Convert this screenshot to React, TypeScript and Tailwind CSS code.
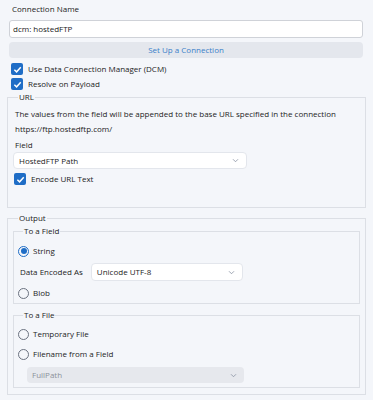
import { ReactNode } from 'react';

const font = { fontFamily: '"Open Sans", "Noto Sans", sans-serif' };

function Check({ label }: { label: string }) {
  return (
    <label className="flex items-center h-[14px] gap-[5px]">
      <span className="w-[12px] h-[12px] rounded-[2px] bg-[#1f6dc6] flex items-center justify-center">
        <svg width="9" height="9" viewBox="0 0 10 10">
          <path d="M1.5 5.2 L4 7.6 L8.6 2.4" fill="none" stroke="white" strokeWidth="1.6" />
        </svg>
      </span>
      <span className="text-[8px] text-[#1c1c1c]">{label}</span>
    </label>
  );
}

function Radio({ label, checked }: { label: string; checked?: boolean }) {
  return (
    <label className="flex items-center h-[12px] gap-[4px]">
      {checked ? (
        <span className="w-[11px] h-[11px] rounded-full border border-[#1f6dc6] flex items-center justify-center">
          <span className="w-[6px] h-[6px] rounded-full bg-[#1f6dc6]" />
        </span>
      ) : (
        <span className="w-[11px] h-[11px] rounded-full border border-[#6b7280]" />
      )}
      <span className="text-[8px] text-[#1c1c1c]">{label}</span>
    </label>
  );
}

function Chevron() {
  return (
    <svg width="7" height="5" viewBox="0 0 8 6" className="shrink-0">
      <path d="M1 1.5 L4 4.5 L7 1.5" fill="none" stroke="#8a93a3" strokeWidth="1" />
    </svg>
  );
}

function Select({ value, disabled, className }: { value: string; disabled?: boolean; className: string }) {
  return (
    <div
      className={`flex items-center justify-between rounded-[4px] pl-[5px] pr-[7px] text-[8px] ${
        disabled ? 'bg-[#e6e8ed] text-[#8c919a]' : 'bg-white border border-[#e3e6ec] text-[#1c1c1c]'
      } ${className}`}
    >
      <span>{value}</span>
      <Chevron />
    </div>
  );
}

function Group({ title, className, children }: { title: string; className: string; children: ReactNode }) {
  return (
    <fieldset className={`border border-[#dcdfe5] ${className}`}>
      <legend className="ml-[5px] px-[1px] text-[8px] leading-[12px] text-[#1c1c1c]">{title}</legend>
      {children}
    </fieldset>
  );
}

export default function App() {
  return (
    <div className="w-[373px] h-[400px] bg-[#f4f6fa] px-[7px] pt-[3px] overflow-hidden" style={font}>
      <div className="ml-[2px] mr-[3px]">
        <div className="h-[12px] leading-[12px] text-[8px] text-[#1c1c1c] pl-[3px]">Connection Name</div>
        <div className="mt-[5px] h-[18px] bg-white border border-[#cfd2d8] rounded-[3px] flex items-center px-[3px] text-[8px] text-[#1a1a1a]">
          dcm: hostedFTP
        </div>
        <button className="mt-[4px] w-full h-[16px] bg-[#e4e7ed] rounded-[4px] text-[8px] text-[#3a80c9] flex items-center justify-center">
          Set Up a Connection
        </button>
        <div className="mt-[4px] pl-[2px] flex flex-col gap-[1px]">
          <Check label="Use Data Connection Manager (DCM)" />
          <Check label="Resolve on Payload" />
        </div>
      </div>

      <Group title="URL" className="px-[5px] pb-[21px]">
        <div className="pl-[2px] mt-[5px] h-[12px] leading-[12px] text-[8px] text-[#1c1c1c] whitespace-nowrap">
          The values from the field will be appended to the base URL specified in the connection
        </div>
        <div className="pl-[2px] mt-[3px] h-[12px] leading-[12px] text-[8px] text-[#1c1c1c]">https://ftp.hostedftp.com/</div>
        <div className="pl-[2px] mt-[4px] h-[12px] leading-[12px] text-[8px] text-[#1c1c1c]">Field</div>
        <Select value="HostedFTP Path" className="mt-[1px] w-[234px] h-[17px]" />
        <div className="mt-[3px] pl-[1px]">
          <Check label="Encode URL Text" />
        </div>
      </Group>

      <Group title="Output" className="mt-[4px] px-[5px] pt-[1px] pb-[6px]">
        <Group title="To a Field" className="px-[4px] pb-[4px]">
          <div className="mt-[8px]">
            <Radio label="String" checked />
          </div>
          <div className="mt-[6px] flex items-center gap-[8px] pl-[2px]">
            <span className="text-[8px] text-[#1c1c1c]">Data Encoded As</span>
            <Select value="Unicode UTF-8" className="w-[152px] h-[18px]" />
          </div>
          <div className="mt-[6px]">
            <Radio label="Blob" />
          </div>
        </Group>
        <Group title="To a File" className="mt-[5px] px-[4px] pb-[4px]">
          <div className="mt-[7px]">
            <Radio label="Temporary File" />
          </div>
          <div className="mt-[8px]">
            <Radio label="Filename from a Field" />
          </div>
          <Select value="FullPath" disabled className="mt-[7px] ml-[9px] w-[217px] h-[16px]" />
        </Group>
      </Group>
    </div>
  );
}
